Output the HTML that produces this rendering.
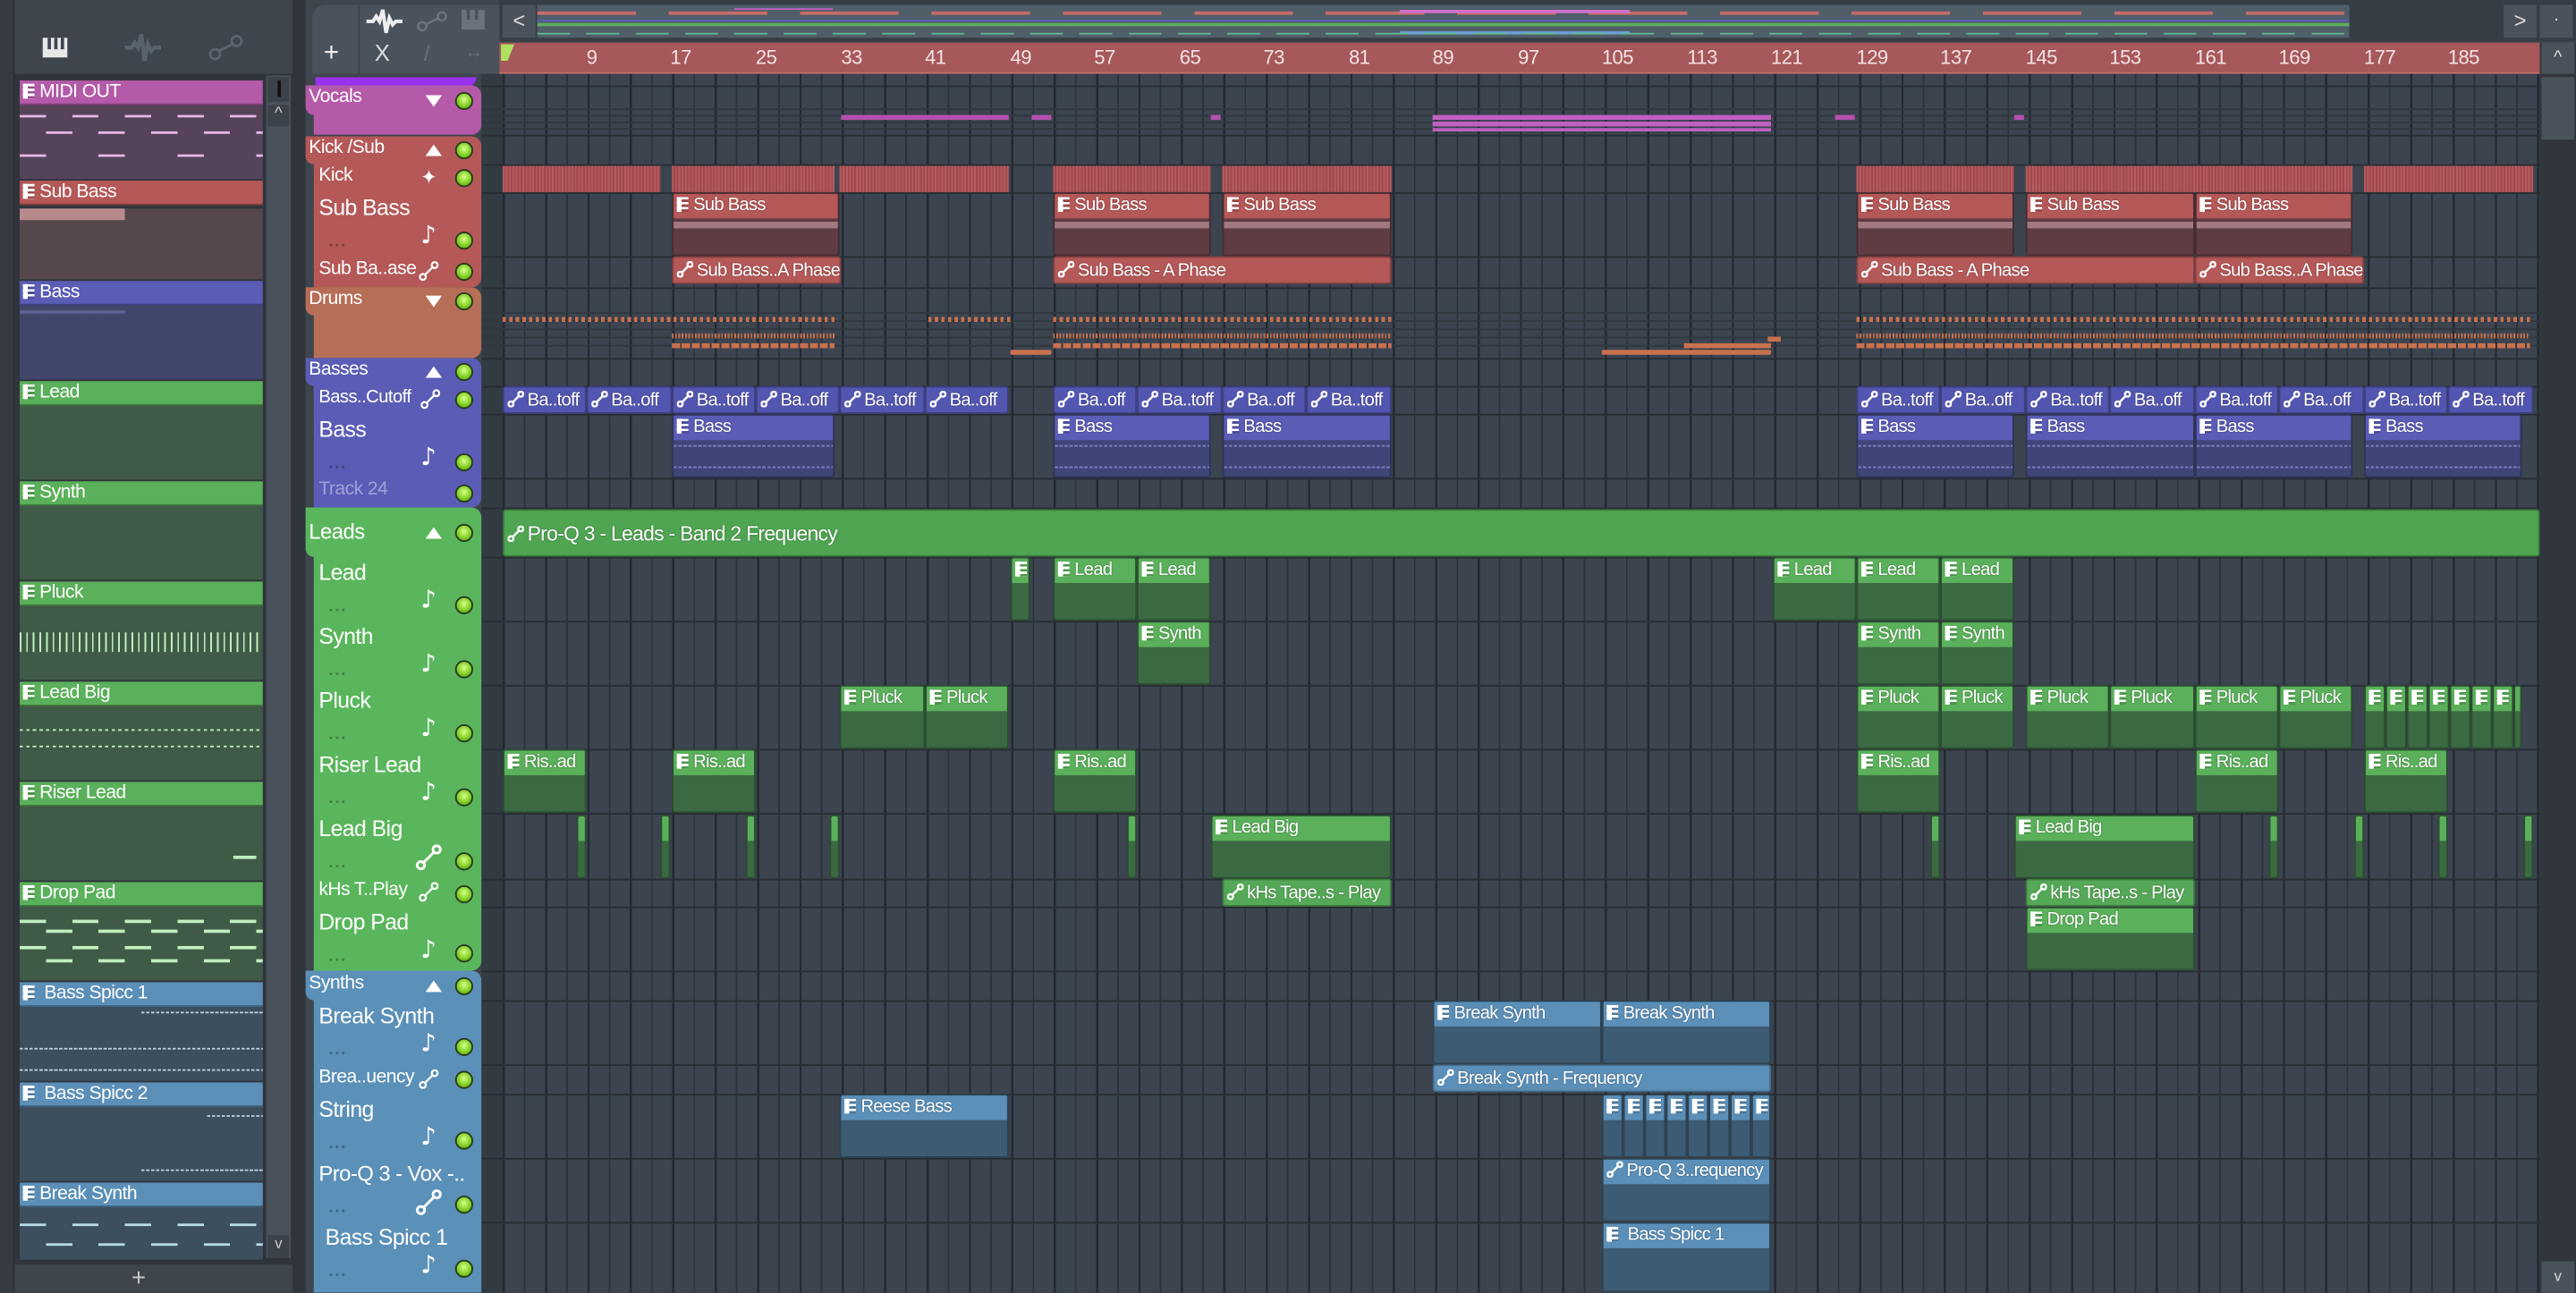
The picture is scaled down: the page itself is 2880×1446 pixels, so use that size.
<!DOCTYPE html>
<html><head><meta charset="utf-8"><style>
html,body{margin:0;padding:0;width:2880px;height:1446px;overflow:hidden;background:#3d444c}
#app{position:absolute;left:0;top:0;width:1568px;height:787px;transform:scale(1.836735);transform-origin:0 0;background:#3e454d;overflow:hidden;font-family:"Liberation Sans Narrow","Liberation Sans",sans-serif;color:#fff}
.abs{position:absolute}
.c{position:absolute;border-radius:2px;overflow:hidden;box-sizing:border-box;border:1px solid rgba(0,0,0,.25)}
.c b{display:block;height:15px;line-height:15px;font-weight:normal;font-size:11px;letter-spacing:-0.4px;padding-left:2px;white-space:nowrap;overflow:hidden;text-shadow:0 0 1px rgba(0,0,0,.4)}
.g{background:#3b6a42}.g b{background:#5bb05b}
.r{background:#5f3b42}.r b{background:#b55858}
.u{background:#3f4577}.u b{background:#5a5cb5}
.s{background:#3d5b72}.s b{background:#5b8fb8}
.r{background-image:linear-gradient(#a07a80,#a07a80);background-size:100% 4px;background-repeat:no-repeat;background-position:0 17px}
.u{background-image:repeating-linear-gradient(to right,#7a7fc0 0 2px,transparent 2px 3px),repeating-linear-gradient(to right,#7a7fc0 0 2px,transparent 2px 3px);background-size:100% 1px,100% 1px;background-repeat:no-repeat;background-position:0 18px,0 31px}
.a{height:17px}
.a.g{background:#55a857}.a.r{background:#b55858}.a.u{background:#5356b0}.a.s{background:#5b8fb8}
.a b{height:16px;line-height:16px;background:transparent!important}
i.p{display:inline-block;width:7px;height:9px;vertical-align:-1px;margin-right:3px;background:linear-gradient(to right,#fff 0 3px,transparent 3px),repeating-linear-gradient(#fff 0 1.5px,rgba(0,0,0,.15) 1.5px 3px)}
svg.k{width:10px;height:10px;vertical-align:-1px;margin-right:2px;fill:none;stroke:#fff;stroke-width:1.3}
.hl{position:absolute;left:293px;width:1253px;height:1px;background:#272d33}
.tr{position:absolute;font-size:11.5px;letter-spacing:-0.3px;white-space:nowrap}
.led{position:absolute;width:9px;height:9px;border-radius:50%;background:radial-gradient(circle at 50% 40%,#d8ff8a,#7ccc20 60%,#4b8a10);border:1px solid #2c3a20}
.tri{position:absolute;width:0;height:0;border-left:5px solid transparent;border-right:5px solid transparent}
.dn{border-top:7px solid #fff}.up{border-bottom:7px solid #fff}
.note{position:absolute;font-size:15px;line-height:15px;font-family:"DejaVu Sans",sans-serif}
.dots{position:absolute;font-size:10px;letter-spacing:1px;color:rgba(0,0,0,.3);font-weight:bold}
.bi{position:absolute;left:12px;width:148px;height:60px;overflow:hidden}
.bi b{display:block;height:14px;line-height:14px;font-weight:normal;font-size:11.5px;letter-spacing:-0.3px;padding-left:2px;border-bottom:1px solid rgba(0,0,0,.3)}
.bi div{height:46px}
.dr{position:absolute;height:3px;background:repeating-linear-gradient(to right,#c9714f 0 2px,transparent 2px 4px)}
</style></head><body><div id="app">

<div class="abs" style="left:0;top:0;width:8px;height:787px;background:#353b42"></div>
<div class="abs" style="left:8px;top:0;width:1px;height:787px;background:#2b3036"></div>
<div class="abs" style="left:26px;top:23px;width:15px;height:12px;background:#e8e8e8"></div>
<div class="abs" style="left:29px;top:23px;width:2px;height:7px;background:#3e454d"></div>
<div class="abs" style="left:33px;top:23px;width:2px;height:7px;background:#3e454d"></div>
<div class="abs" style="left:37px;top:23px;width:2px;height:7px;background:#3e454d"></div>
<svg class="abs" style="left:76px;top:20px" width="22" height="18" viewBox="0 0 22 18"><path d="M0 9h4l2-3 2 3 2-8 2 16 2-10 2 4 2-2h4" stroke="#59636c" stroke-width="2.4" fill="none"/></svg>
<svg class="abs" style="left:126px;top:20px" width="24" height="18" viewBox="0 0 24 18"><circle cx="5" cy="13" r="3" stroke="#59636c" stroke-width="1.6" fill="none"/><circle cx="18" cy="5" r="3" stroke="#59636c" stroke-width="1.6" fill="none"/><path d="M7.5 11L15.5 7" stroke="#59636c" stroke-width="1.6"/></svg>

<div class="abs" style="left:9px;top:45px;width:170px;height:725px;background:#2f353b"></div>
<div class="abs" style="left:162px;top:46px;width:15px;height:720px;background:#49515a"></div>
<div class="abs" style="left:163px;top:47px;width:13px;height:15px;background:#3b4249"></div>
<div class="abs" style="left:169px;top:49px;width:2px;height:10px;background:#111"></div>
<div class="abs" style="left:163px;top:64px;width:13px;height:13px;background:#3b4249;color:#ccc;font-size:10px;text-align:center">^</div>
<div class="abs" style="left:163px;top:752px;width:13px;height:14px;background:#3b4249;color:#ccc;font-size:9px;text-align:center">v</div>
<div class="abs" style="left:80px;top:770px;font-size:15px;color:#c8c8c8">+</div>

<div class="bi" style="top:49px"><b style="background:#b35aa8"><i class="p"></i>MIDI OUT</b><div style="background:#55435a;background-image:repeating-linear-gradient(to right,#e8b8e8 0 16px,transparent 16px 32px),repeating-linear-gradient(to right,transparent 0 16px,#e8b8e8 16px 32px),repeating-linear-gradient(to right,#e8b8e8 0 16px,transparent 16px 48px);background-size:100% 1.5px;background-repeat:no-repeat;background-position:0 6px,0 16px,0 30px"></div></div>
<div class="bi" style="top:110px"><b style="background:#b55858"><i class="p"></i>Sub Bass</b><div style="background:#56474c"><div style="height:7px;width:64px;background:#b88a8e;margin-top:2px"></div></div></div>
<div class="bi" style="top:171px"><b style="background:#5a5cb5"><i class="p"></i>Bass</b><div style="background:#41476a;background-image:linear-gradient(#5e6290,#5e6290);background-size:64px 2px;background-repeat:no-repeat;background-position:0 3px"></div></div>
<div class="bi" style="top:232px"><b style="background:#5bb05b"><i class="p"></i>Lead</b><div style="background:#3f5a46"></div></div>
<div class="bi" style="top:293px"><b style="background:#5bb05b"><i class="p"></i>Synth</b><div style="background:#3f5a46"></div></div>
<div class="bi" style="top:354px"><b style="background:#5bb05b"><i class="p"></i>Pluck</b><div style="background:#3f5a46;background-image:repeating-linear-gradient(to right,#bfeebf 0 1px,transparent 1px 4px);background-size:100% 12px;background-repeat:repeat-x;background-position:0 16px"></div></div>
<div class="bi" style="top:415px"><b style="background:#5bb05b"><i class="p"></i>Lead Big</b><div style="background:#3f5a46;background-image:repeating-linear-gradient(to right,#bfeebf 0 2px,transparent 2px 4px),repeating-linear-gradient(to right,#bfeebf 0 2px,transparent 2px 4px);background-size:100% 1px;background-repeat:no-repeat;background-position:0 14px,0 24px"></div></div>
<div class="bi" style="top:476px"><b style="background:#5bb05b"><i class="p"></i>Riser Lead</b><div style="background:#3f5a46;background-image:linear-gradient(#bfeebf,#bfeebf);background-size:14px 2px;background-repeat:no-repeat;background-position:130px 30px"></div></div>
<div class="bi" style="top:537px"><b style="background:#5bb05b"><i class="p"></i>Drop Pad</b><div style="background:#3f5a46;background-image:repeating-linear-gradient(to right,#bfeebf 0 16px,transparent 16px 32px),repeating-linear-gradient(to right,transparent 0 16px,#bfeebf 16px 32px),repeating-linear-gradient(to right,#bfeebf 0 16px,transparent 16px 32px),repeating-linear-gradient(to right,transparent 0 16px,#bfeebf 16px 32px);background-size:100% 2px;background-repeat:no-repeat;background-position:0 8px,0 14px,0 24px,0 32px"></div></div>
<div class="bi" style="top:598px"><b style="background:#5b8fb8"><i class="p"></i>&nbsp;Bass Spicc 1</b><div style="background:#3c4f5f;background-image:repeating-linear-gradient(to right,#b8d0e0 0 2px,transparent 2px 3px),repeating-linear-gradient(to right,#b8d0e0 0 2px,transparent 2px 3px),repeating-linear-gradient(to right,#b8d0e0 0 2px,transparent 2px 3px);background-size:74px 1px,100% 1px,100% 1px;background-repeat:no-repeat;background-position:right 3px,0 25px,0 38px"></div></div>
<div class="bi" style="top:659px"><b style="background:#5b8fb8"><i class="p"></i>&nbsp;Bass Spicc 2</b><div style="background:#3c4f5f;background-image:repeating-linear-gradient(to right,#b8d0e0 0 2px,transparent 2px 3px),repeating-linear-gradient(to right,#b8d0e0 0 2px,transparent 2px 3px);background-size:34px 1px,74px 1px;background-repeat:no-repeat;background-position:right 5px,right 38px"></div></div>
<div class="bi" style="top:720px;height:47px"><b style="background:#5b8fb8"><i class="p"></i>Break Synth</b><div style="background:#3c4f5f;background-image:repeating-linear-gradient(to right,#b8e0ea 0 16px,transparent 16px 32px),repeating-linear-gradient(to right,transparent 0 16px,#b8e0ea 16px 32px);background-size:100% 1.5px;background-repeat:no-repeat;background-position:0 10px,0 22px"></div></div>

<div class="abs" style="left:178px;top:0;width:8px;height:787px;background:#2f353b"></div>
<div class="abs" style="left:190px;top:3px;width:115px;height:42px;background:#4a525b;border-radius:8px 0 0 0"></div>
<div class="abs" style="left:218px;top:3px;width:1px;height:42px;background:#3a4047"></div>
<div class="abs" style="left:197px;top:24px;font-size:16px;color:#eee">+</div>
<svg class="abs" style="left:223px;top:5px" width="22" height="16" viewBox="0 0 22 16"><path d="M0 8h4l2-3 2 3 2-7 2 14 2-9 2 4 2-2h4" stroke="#eee" stroke-width="2.2" fill="none"/></svg>
<div class="abs" style="left:228px;top:24px;font-size:14px;color:#ddd">X</div>
<svg class="abs" style="left:253px;top:6px" width="20" height="14" viewBox="0 0 20 14"><circle cx="4" cy="10" r="2.5" stroke="#6a737c" stroke-width="1.4" fill="none"/><circle cx="16" cy="4" r="2.5" stroke="#6a737c" stroke-width="1.4" fill="none"/><path d="M6 9L14 5" stroke="#6a737c" stroke-width="1.4"/></svg>
<div class="abs" style="left:281px;top:6px;width:14px;height:12px;background:#6a737c"></div>
<div class="abs" style="left:284px;top:6px;width:2px;height:6px;background:#4a525b"></div><div class="abs" style="left:289px;top:6px;width:2px;height:6px;background:#4a525b"></div>
<div class="abs" style="left:258px;top:25px;font-size:13px;color:#6a737c">/</div>
<div class="abs" style="left:283px;top:26px;font-size:11px;color:#6a737c">↔</div>

<div class="abs" style="left:304px;top:0;width:1264px;height:25px;background:#363d44"></div>
<div class="abs" style="left:306px;top:3px;width:20px;height:20px;background:#4a525b;color:#ddd;font-size:13px;text-align:center;line-height:20px">&lt;</div>
<div class="abs" style="left:327px;top:3px;width:1103px;height:20px;background:#505e68">
 <div class="abs" style="left:0;top:4px;width:1103px;height:2px;background:repeating-linear-gradient(to right,#c86c68 0 60px,transparent 60px 80px)"></div>
 <div class="abs" style="left:0;top:9px;width:1103px;height:1px;background:#5a5cc0"></div>
 <div class="abs" style="left:0;top:11px;width:1103px;height:2px;background:#5cad5c"></div>
 <div class="abs" style="left:120px;top:2px;width:60px;height:1px;background:#c060c0"></div>
 <div class="abs" style="left:525px;top:3px;width:140px;height:2px;background:#d070d0"></div>
 <div class="abs" style="left:525px;top:16px;width:140px;height:2px;background:#6aa0d0"></div>
 <div class="abs" style="left:0;top:17px;width:1103px;height:1px;background:repeating-linear-gradient(to right,#60b890 0 20px,transparent 20px 30px)"></div>
</div>
<div class="abs" style="left:1524px;top:3px;width:20px;height:20px;background:#4a525b;color:#ddd;font-size:13px;text-align:center;line-height:20px">&gt;</div>
<div class="abs" style="left:1546px;top:3px;width:20px;height:20px;background:#4a525b;color:#ddd;font-size:11px;text-align:center;line-height:18px">·</div>

<div class="abs" style="left:304px;top:26px;width:1242px;height:18px;background:#a7585b;border-bottom:1px solid #c07070"></div>
<div class="abs" style="left:305px;top:27px;width:0;height:0;border-left:4px solid #b0e060;border-right:4px solid transparent;border-top:10px solid #b0e060"></div>
<div class="abs" style="top:27px;left:0;width:1546px;height:17px;font-size:12px;line-height:17px;color:#f3e3e3;letter-spacing:-0.3px">
<span class="abs" style="left:357px">9</span><span class="abs" style="left:408px">17</span><span class="abs" style="left:460px">25</span><span class="abs" style="left:512px">33</span><span class="abs" style="left:563px">41</span><span class="abs" style="left:615px">49</span><span class="abs" style="left:666px">57</span><span class="abs" style="left:718px">65</span><span class="abs" style="left:769px">73</span><span class="abs" style="left:821px">81</span><span class="abs" style="left:872px">89</span><span class="abs" style="left:924px">97</span><span class="abs" style="left:975px">105</span><span class="abs" style="left:1027px">113</span><span class="abs" style="left:1078px">121</span><span class="abs" style="left:1130px">129</span><span class="abs" style="left:1181px">137</span><span class="abs" style="left:1233px">145</span><span class="abs" style="left:1284px">153</span><span class="abs" style="left:1336px">161</span><span class="abs" style="left:1387px">169</span><span class="abs" style="left:1439px">177</span><span class="abs" style="left:1490px">185</span>
</div>
<div class="abs" style="left:1546px;top:26px;width:22px;height:761px;background:#30363c"></div>
<div class="abs" style="left:1547px;top:26px;width:20px;height:19px;background:#4a525b;color:#ddd;font-size:11px;text-align:center;line-height:19px">^</div>
<div class="abs" style="left:1547px;top:47px;width:20px;height:38px;background:#4a525b"></div>
<div class="abs" style="left:1547px;top:768px;width:20px;height:19px;background:#4a525b;color:#ddd;font-size:9px;text-align:center;line-height:19px">v</div>

<div class="abs" style="left:293px;top:45px;width:13px;height:742px;background:#323a42"></div>
<div class="abs" style="left:306px;top:45px;width:1240px;height:742px;background-color:#3b444f;background-image:repeating-linear-gradient(to right,#23292f 0 1.3px,transparent 1.3px 25.8px),repeating-linear-gradient(to right,#2c333a 0 1px,transparent 1px 12.9px)"></div>
<div class="hl" style="top:52px"></div><div class="hl" style="top:82px"></div><div class="hl" style="top:100px"></div><div class="hl" style="top:117px"></div><div class="hl" style="top:156px"></div><div class="hl" style="top:175px"></div><div class="hl" style="top:218px"></div><div class="hl" style="top:235px"></div><div class="hl" style="top:252px"></div><div class="hl" style="top:291px"></div><div class="hl" style="top:309px"></div><div class="hl" style="top:339px"></div><div class="hl" style="top:378px"></div><div class="hl" style="top:417px"></div><div class="hl" style="top:456px"></div><div class="hl" style="top:495px"></div><div class="hl" style="top:535px"></div><div class="hl" style="top:552px"></div><div class="hl" style="top:591px"></div><div class="hl" style="top:609px"></div><div class="hl" style="top:648px"></div><div class="hl" style="top:666px"></div><div class="hl" style="top:705px"></div><div class="hl" style="top:744px"></div>
<div class="hl" style="top:66px;background:#30373e"></div><div class="hl" style="top:70px;background:#30373e"></div><div class="hl" style="top:74px;background:#30373e"></div><div class="hl" style="top:78px;background:#30373e"></div>
<div class="hl" style="top:190px;background:#30373e"></div><div class="hl" style="top:195px;background:#30373e"></div><div class="hl" style="top:200px;background:#30373e"></div><div class="hl" style="top:205px;background:#30373e"></div><div class="hl" style="top:210px;background:#30373e"></div>

<div class="abs" style="left:192px;top:47px;width:98px;height:6px;background:#9a30f0;border-radius:0 0 6px 0"></div>
<div class="abs" style="left:191px;top:52px;width:102px;height:30px;background:#b45aa8;border-radius:0 6px 6px 0"></div>
<div class="abs" style="left:186px;top:52px;width:80px;height:18px;background:#b45aa8;border-radius:0 0 0 5px"></div>
<div class="tr" style="left:188px;top:53px">Vocals</div><div class="tri dn" style="left:259px;top:58px"></div><div class="led" style="left:277px;top:56px"></div>

<div class="abs" style="left:191px;top:83px;width:102px;height:92px;background:#b55858;border-radius:0 6px 6px 0"></div>
<div class="abs" style="left:186px;top:83px;width:80px;height:17px;background:#b55858;border-radius:0 0 0 5px"></div>
<div class="tr" style="left:188px;top:84px">Kick /Sub</div><div class="tri up" style="left:259px;top:88px"></div><div class="led" style="left:277px;top:86px"></div>
<div class="tr" style="left:194px;top:101px">Kick</div><div class="note" style="left:256px;top:101px;font-size:12px">✦</div><div class="led" style="left:277px;top:103px"></div>
<div class="tr" style="left:194px;top:119px;font-size:13.5px">Sub Bass</div><div class="note" style="left:256px;top:136px">♪</div><div class="dots" style="left:200px;top:142px">...</div><div class="led" style="left:277px;top:141px"></div>
<div class="tr" style="left:194px;top:158px">Sub Ba..ase</div><svg class="abs" style="left:255px;top:159px" width="12" height="12" viewBox="0 0 10 10"><circle cx="2" cy="8" r="1.5" stroke="#fff" fill="none"/><circle cx="8" cy="2" r="1.5" stroke="#fff" fill="none"/><path d="M3 7L7 3" stroke="#fff"/></svg><div class="led" style="left:277px;top:160px"></div>

<div class="abs" style="left:191px;top:175px;width:102px;height:43px;background:#b76e56;border-radius:0 6px 6px 0"></div>
<div class="abs" style="left:186px;top:175px;width:80px;height:17px;background:#b76e56;border-radius:0 0 0 5px"></div>
<div class="tr" style="left:188px;top:176px">Drums</div><div class="tri dn" style="left:259px;top:180px"></div><div class="led" style="left:277px;top:178px"></div>

<div class="abs" style="left:191px;top:218px;width:102px;height:91px;background:#5a5cb5;border-radius:0 6px 6px 0"></div>
<div class="abs" style="left:186px;top:218px;width:80px;height:17px;background:#5a5cb5;border-radius:0 0 0 5px"></div>
<div class="tr" style="left:188px;top:219px">Basses</div><div class="tri up" style="left:259px;top:223px"></div><div class="led" style="left:277px;top:221px"></div>
<div class="tr" style="left:194px;top:236px;font-size:11px">Bass..Cutoff</div><svg class="abs" style="left:256px;top:237px" width="12" height="12" viewBox="0 0 10 10"><circle cx="2" cy="8" r="1.5" stroke="#fff" fill="none"/><circle cx="8" cy="2" r="1.5" stroke="#fff" fill="none"/><path d="M3 7L7 3" stroke="#fff"/></svg><div class="led" style="left:277px;top:238px"></div>
<div class="tr" style="left:194px;top:254px;font-size:13.5px">Bass</div><div class="note" style="left:256px;top:271px">♪</div><div class="dots" style="left:200px;top:277px">...</div><div class="led" style="left:277px;top:276px"></div>
<div class="tr" style="left:194px;top:292px;color:#9fa1d8">Track 24</div><div class="led" style="left:277px;top:295px"></div>

<div class="abs" style="left:191px;top:309px;width:102px;height:282px;background:#5ab65c;border-radius:0 6px 6px 0"></div>
<div class="abs" style="left:186px;top:309px;width:80px;height:30px;background:#5ab65c;border-radius:0 0 0 5px"></div>
<div class="tr" style="left:188px;top:316px;font-size:13px">Leads</div><div class="tri up" style="left:259px;top:321px"></div><div class="led" style="left:277px;top:319px"></div>
<div class="tr" style="left:194px;top:341px;font-size:13.5px">Lead</div><div class="note" style="left:256px;top:358px">♪</div><div class="dots" style="left:200px;top:364px">...</div><div class="led" style="left:277px;top:363px"></div>
<div class="tr" style="left:194px;top:380px;font-size:13.5px">Synth</div><div class="note" style="left:256px;top:397px">♪</div><div class="dots" style="left:200px;top:403px">...</div><div class="led" style="left:277px;top:402px"></div>
<div class="tr" style="left:194px;top:419px;font-size:13.5px">Pluck</div><div class="note" style="left:256px;top:436px">♪</div><div class="dots" style="left:200px;top:442px">...</div><div class="led" style="left:277px;top:441px"></div>
<div class="tr" style="left:194px;top:458px;font-size:13.5px">Riser Lead</div><div class="note" style="left:256px;top:475px">♪</div><div class="dots" style="left:200px;top:481px">...</div><div class="led" style="left:277px;top:480px"></div>
<div class="tr" style="left:194px;top:497px;font-size:13.5px">Lead Big</div><svg class="abs" style="left:253px;top:514px" width="16" height="16" viewBox="0 0 10 10"><circle cx="2" cy="8" r="1.4" stroke="#fff" fill="none"/><circle cx="8" cy="2" r="1.4" stroke="#fff" fill="none"/><path d="M3 7L7 3" stroke="#fff"/></svg><div class="dots" style="left:200px;top:520px">...</div><div class="led" style="left:277px;top:519px"></div>
<div class="tr" style="left:194px;top:536px">kHs T..Play</div><svg class="abs" style="left:255px;top:537px" width="12" height="12" viewBox="0 0 10 10"><circle cx="2" cy="8" r="1.5" stroke="#fff" fill="none"/><circle cx="8" cy="2" r="1.5" stroke="#fff" fill="none"/><path d="M3 7L7 3" stroke="#fff"/></svg><div class="led" style="left:277px;top:539px"></div>
<div class="tr" style="left:194px;top:554px;font-size:13.5px">Drop Pad</div><div class="note" style="left:256px;top:571px">♪</div><div class="dots" style="left:200px;top:577px">...</div><div class="led" style="left:277px;top:575px"></div>

<div class="abs" style="left:191px;top:591px;width:102px;height:196px;background:#5b90b8;border-radius:0 6px 0 0"></div>
<div class="abs" style="left:186px;top:591px;width:80px;height:18px;background:#5b90b8;border-radius:0 0 0 5px"></div>
<div class="tr" style="left:188px;top:593px">Synths</div><div class="tri up" style="left:259px;top:597px"></div><div class="led" style="left:277px;top:595px"></div>
<div class="tr" style="left:194px;top:611px;font-size:13.5px">Break Synth</div><div class="note" style="left:256px;top:628px">♪</div><div class="dots" style="left:200px;top:634px">...</div><div class="led" style="left:277px;top:632px"></div>
<div class="tr" style="left:194px;top:650px">Brea..uency</div><svg class="abs" style="left:255px;top:651px" width="12" height="12" viewBox="0 0 10 10"><circle cx="2" cy="8" r="1.5" stroke="#fff" fill="none"/><circle cx="8" cy="2" r="1.5" stroke="#fff" fill="none"/><path d="M3 7L7 3" stroke="#fff"/></svg><div class="led" style="left:277px;top:652px"></div>
<div class="tr" style="left:194px;top:668px;font-size:13.5px">String</div><div class="note" style="left:256px;top:685px">♪</div><div class="dots" style="left:200px;top:691px">...</div><div class="led" style="left:277px;top:689px"></div>
<div class="tr" style="left:194px;top:707px;font-size:13px">Pro-Q 3 - Vox -..</div><svg class="abs" style="left:253px;top:724px" width="16" height="16" viewBox="0 0 10 10"><circle cx="2" cy="8" r="1.4" stroke="#fff" fill="none"/><circle cx="8" cy="2" r="1.4" stroke="#fff" fill="none"/><path d="M3 7L7 3" stroke="#fff"/></svg><div class="dots" style="left:200px;top:730px">...</div><div class="led" style="left:277px;top:728px"></div>
<div class="tr" style="left:198px;top:746px;font-size:13.5px">Bass Spicc 1</div><div class="note" style="left:256px;top:763px">♪</div><div class="dots" style="left:200px;top:769px">...</div><div class="led" style="left:277px;top:767px"></div>

<div class="abs" style="left:512px;top:70px;width:102px;height:3px;background:#b54fb0"></div>
<div class="abs" style="left:628px;top:70px;width:12px;height:3px;background:#b54fb0"></div>
<div class="abs" style="left:737px;top:70px;width:6px;height:3px;background:#b54fb0"></div>
<div class="abs" style="left:872px;top:70px;width:206px;height:3px;background:#c060c0"></div>
<div class="abs" style="left:872px;top:74px;width:206px;height:3px;background:#c060c0"></div>
<div class="abs" style="left:872px;top:78px;width:206px;height:2px;background:#c060c0"></div>
<div class="abs" style="left:1117px;top:70px;width:12px;height:3px;background:#b54fb0"></div>
<div class="abs" style="left:1226px;top:70px;width:6px;height:3px;background:#b54fb0"></div>

<div class="abs" style="top:101px;height:16px;left:306px;width:96px;background:repeating-linear-gradient(to right,#b75b5e 0 1px,#9c4a4e 1px 2px)"></div>
<div class="abs" style="top:101px;height:16px;left:409px;width:99px;background:repeating-linear-gradient(to right,#b75b5e 0 1px,#9c4a4e 1px 2px)"></div>
<div class="abs" style="top:101px;height:16px;left:511px;width:103px;background:repeating-linear-gradient(to right,#b75b5e 0 1px,#9c4a4e 1px 2px)"></div>
<div class="abs" style="top:101px;height:16px;left:641px;width:96px;background:repeating-linear-gradient(to right,#b75b5e 0 1px,#9c4a4e 1px 2px)"></div>
<div class="abs" style="top:101px;height:16px;left:744px;width:103px;background:repeating-linear-gradient(to right,#b75b5e 0 1px,#9c4a4e 1px 2px)"></div>
<div class="abs" style="top:101px;height:16px;left:1130px;width:96px;background:repeating-linear-gradient(to right,#b75b5e 0 1px,#9c4a4e 1px 2px)"></div>
<div class="abs" style="top:101px;height:16px;left:1233px;width:199px;background:repeating-linear-gradient(to right,#b75b5e 0 1px,#9c4a4e 1px 2px)"></div>
<div class="abs" style="top:101px;height:16px;left:1439px;width:103px;background:repeating-linear-gradient(to right,#b75b5e 0 1px,#9c4a4e 1px 2px)"></div>

<div class="c r" style="left:409px;top:117px;width:102px;height:39px"><b><i class="p"></i>Sub Bass</b></div>
<div class="c r" style="left:641px;top:117px;width:96px;height:39px"><b><i class="p"></i>Sub Bass</b></div>
<div class="c r" style="left:744px;top:117px;width:103px;height:39px"><b><i class="p"></i>Sub Bass</b></div>
<div class="c r" style="left:1130px;top:117px;width:96px;height:39px"><b><i class="p"></i>Sub Bass</b></div>
<div class="c r" style="left:1233px;top:117px;width:103px;height:39px"><b><i class="p"></i>Sub Bass</b></div>
<div class="c r" style="left:1336px;top:117px;width:96px;height:39px"><b><i class="p"></i>Sub Bass</b></div>
<div class="c r a" style="left:409px;top:156px;width:103px;background-image:none"><b><svg class="k" viewBox="0 0 10 10"><circle cx="2" cy="8" r="1.5"/><circle cx="8" cy="2" r="1.5"/><path d="M3 7L7 3"/></svg>Sub Bass..A Phase</b></div>
<div class="c r a" style="left:641px;top:156px;width:206px;background-image:none"><b><svg class="k" viewBox="0 0 10 10"><circle cx="2" cy="8" r="1.5"/><circle cx="8" cy="2" r="1.5"/><path d="M3 7L7 3"/></svg>Sub Bass - A Phase</b></div>
<div class="c r a" style="left:1130px;top:156px;width:206px;background-image:none"><b><svg class="k" viewBox="0 0 10 10"><circle cx="2" cy="8" r="1.5"/><circle cx="8" cy="2" r="1.5"/><path d="M3 7L7 3"/></svg>Sub Bass - A Phase</b></div>
<div class="c r a" style="left:1336px;top:156px;width:103px;background-image:none"><b><svg class="k" viewBox="0 0 10 10"><circle cx="2" cy="8" r="1.5"/><circle cx="8" cy="2" r="1.5"/><path d="M3 7L7 3"/></svg>Sub Bass..A Phase</b></div>

<div class="dr" style="left:306px;top:193px;width:202px"></div>
<div class="dr" style="left:641px;top:193px;width:206px"></div><div class="dr" style="left:1130px;top:193px;width:410px"></div>
<div class="dr" style="left:565px;top:193px;width:50px"></div>
<div class="dr" style="left:409px;top:203px;width:99px;background:repeating-linear-gradient(to right,#c9714f 0 1px,transparent 1px 2px)"></div>
<div class="dr" style="left:641px;top:203px;width:206px;background:repeating-linear-gradient(to right,#c9714f 0 1px,transparent 1px 2px)"></div>
<div class="dr" style="left:1130px;top:203px;width:410px;background:repeating-linear-gradient(to right,#c9714f 0 1px,transparent 1px 2px)"></div>
<div class="dr" style="left:409px;top:209px;width:99px;height:3px;background:repeating-linear-gradient(to right,#c9714f 0 5px,transparent 5px 6px)"></div>
<div class="dr" style="left:641px;top:209px;width:206px;height:3px;background:repeating-linear-gradient(to right,#c9714f 0 5px,transparent 5px 6px)"></div>
<div class="dr" style="left:1130px;top:209px;width:410px;height:3px;background:repeating-linear-gradient(to right,#c9714f 0 5px,transparent 5px 6px)"></div>
<div class="abs" style="left:615px;top:213px;width:25px;height:3px;background:#c9714f;border-radius:1px"></div>
<div class="abs" style="left:975px;top:213px;width:103px;height:3px;background:#c9714f;border-radius:1px"></div>
<div class="abs" style="left:1025px;top:209px;width:53px;height:3px;background:#c9714f"></div>
<div class="abs" style="left:1076px;top:205px;width:8px;height:3px;background:#c9714f"></div>

<div class="c u a" style="left:306px;top:235px;width:51px;background-image:none"><b><svg class="k" viewBox="0 0 10 10"><circle cx="2" cy="8" r="1.5"/><circle cx="8" cy="2" r="1.5"/><path d="M3 7L7 3"/></svg>Ba..toff</b></div>
<div class="c u a" style="left:357px;top:235px;width:52px;background-image:none"><b><svg class="k" viewBox="0 0 10 10"><circle cx="2" cy="8" r="1.5"/><circle cx="8" cy="2" r="1.5"/><path d="M3 7L7 3"/></svg>Ba..off</b></div>
<div class="c u a" style="left:409px;top:235px;width:51px;background-image:none"><b><svg class="k" viewBox="0 0 10 10"><circle cx="2" cy="8" r="1.5"/><circle cx="8" cy="2" r="1.5"/><path d="M3 7L7 3"/></svg>Ba..toff</b></div>
<div class="c u a" style="left:460px;top:235px;width:51px;background-image:none"><b><svg class="k" viewBox="0 0 10 10"><circle cx="2" cy="8" r="1.5"/><circle cx="8" cy="2" r="1.5"/><path d="M3 7L7 3"/></svg>Ba..off</b></div>
<div class="c u a" style="left:511px;top:235px;width:52px;background-image:none"><b><svg class="k" viewBox="0 0 10 10"><circle cx="2" cy="8" r="1.5"/><circle cx="8" cy="2" r="1.5"/><path d="M3 7L7 3"/></svg>Ba..toff</b></div>
<div class="c u a" style="left:563px;top:235px;width:51px;background-image:none"><b><svg class="k" viewBox="0 0 10 10"><circle cx="2" cy="8" r="1.5"/><circle cx="8" cy="2" r="1.5"/><path d="M3 7L7 3"/></svg>Ba..off</b></div>
<div class="c u a" style="left:641px;top:235px;width:51px;background-image:none"><b><svg class="k" viewBox="0 0 10 10"><circle cx="2" cy="8" r="1.5"/><circle cx="8" cy="2" r="1.5"/><path d="M3 7L7 3"/></svg>Ba..off</b></div>
<div class="c u a" style="left:692px;top:235px;width:52px;background-image:none"><b><svg class="k" viewBox="0 0 10 10"><circle cx="2" cy="8" r="1.5"/><circle cx="8" cy="2" r="1.5"/><path d="M3 7L7 3"/></svg>Ba..toff</b></div>
<div class="c u a" style="left:744px;top:235px;width:51px;background-image:none"><b><svg class="k" viewBox="0 0 10 10"><circle cx="2" cy="8" r="1.5"/><circle cx="8" cy="2" r="1.5"/><path d="M3 7L7 3"/></svg>Ba..off</b></div>
<div class="c u a" style="left:795px;top:235px;width:52px;background-image:none"><b><svg class="k" viewBox="0 0 10 10"><circle cx="2" cy="8" r="1.5"/><circle cx="8" cy="2" r="1.5"/><path d="M3 7L7 3"/></svg>Ba..toff</b></div>
<div class="c u a" style="left:1130px;top:235px;width:51px;background-image:none"><b><svg class="k" viewBox="0 0 10 10"><circle cx="2" cy="8" r="1.5"/><circle cx="8" cy="2" r="1.5"/><path d="M3 7L7 3"/></svg>Ba..toff</b></div>
<div class="c u a" style="left:1181px;top:235px;width:52px;background-image:none"><b><svg class="k" viewBox="0 0 10 10"><circle cx="2" cy="8" r="1.5"/><circle cx="8" cy="2" r="1.5"/><path d="M3 7L7 3"/></svg>Ba..off</b></div>
<div class="c u a" style="left:1233px;top:235px;width:51px;background-image:none"><b><svg class="k" viewBox="0 0 10 10"><circle cx="2" cy="8" r="1.5"/><circle cx="8" cy="2" r="1.5"/><path d="M3 7L7 3"/></svg>Ba..toff</b></div>
<div class="c u a" style="left:1284px;top:235px;width:52px;background-image:none"><b><svg class="k" viewBox="0 0 10 10"><circle cx="2" cy="8" r="1.5"/><circle cx="8" cy="2" r="1.5"/><path d="M3 7L7 3"/></svg>Ba..off</b></div>
<div class="c u a" style="left:1336px;top:235px;width:51px;background-image:none"><b><svg class="k" viewBox="0 0 10 10"><circle cx="2" cy="8" r="1.5"/><circle cx="8" cy="2" r="1.5"/><path d="M3 7L7 3"/></svg>Ba..toff</b></div>
<div class="c u a" style="left:1387px;top:235px;width:52px;background-image:none"><b><svg class="k" viewBox="0 0 10 10"><circle cx="2" cy="8" r="1.5"/><circle cx="8" cy="2" r="1.5"/><path d="M3 7L7 3"/></svg>Ba..off</b></div>
<div class="c u a" style="left:1439px;top:235px;width:51px;background-image:none"><b><svg class="k" viewBox="0 0 10 10"><circle cx="2" cy="8" r="1.5"/><circle cx="8" cy="2" r="1.5"/><path d="M3 7L7 3"/></svg>Ba..toff</b></div>
<div class="c u a" style="left:1490px;top:235px;width:52px;background-image:none"><b><svg class="k" viewBox="0 0 10 10"><circle cx="2" cy="8" r="1.5"/><circle cx="8" cy="2" r="1.5"/><path d="M3 7L7 3"/></svg>Ba..toff</b></div>

<div class="c u" style="left:409px;top:252px;width:99px;height:39px"><b><i class="p"></i>Bass</b></div>
<div class="c u" style="left:641px;top:252px;width:96px;height:39px"><b><i class="p"></i>Bass</b></div>
<div class="c u" style="left:744px;top:252px;width:103px;height:39px"><b><i class="p"></i>Bass</b></div>
<div class="c u" style="left:1130px;top:252px;width:96px;height:39px"><b><i class="p"></i>Bass</b></div>
<div class="c u" style="left:1233px;top:252px;width:103px;height:39px"><b><i class="p"></i>Bass</b></div>
<div class="c u" style="left:1336px;top:252px;width:96px;height:39px"><b><i class="p"></i>Bass</b></div>
<div class="c u" style="left:1439px;top:252px;width:96px;height:39px"><b><i class="p"></i>Bass</b></div>

<div class="c g a" style="left:306px;top:310px;width:1240px;height:29px;background:#4fa552"><b style="height:28px;line-height:28px;font-size:12.5px"><svg class="k" viewBox="0 0 10 10"><circle cx="2" cy="8" r="1.5"/><circle cx="8" cy="2" r="1.5"/><path d="M3 7L7 3"/></svg>Pro-Q 3 - Leads - Band 2 Frequency</b></div>

<div class="c g" style="left:615px;top:339px;width:12px;height:39px"><b><i class="p"></i></b></div>
<div class="c g" style="left:641px;top:339px;width:51px;height:39px"><b><i class="p"></i>Lead</b></div>
<div class="c g" style="left:692px;top:339px;width:45px;height:39px"><b><i class="p"></i>Lead</b></div>
<div class="c g" style="left:1079px;top:339px;width:51px;height:39px"><b><i class="p"></i>Lead</b></div>
<div class="c g" style="left:1130px;top:339px;width:51px;height:39px"><b><i class="p"></i>Lead</b></div>
<div class="c g" style="left:1181px;top:339px;width:45px;height:39px"><b><i class="p"></i>Lead</b></div>
<div class="c g" style="left:692px;top:378px;width:45px;height:39px"><b><i class="p"></i>Synth</b></div>
<div class="c g" style="left:1130px;top:378px;width:51px;height:39px"><b><i class="p"></i>Synth</b></div>
<div class="c g" style="left:1181px;top:378px;width:45px;height:39px"><b><i class="p"></i>Synth</b></div>
<div class="c g" style="left:511px;top:417px;width:52px;height:39px"><b><i class="p"></i>Pluck</b></div>
<div class="c g" style="left:563px;top:417px;width:51px;height:39px"><b><i class="p"></i>Pluck</b></div>
<div class="c g" style="left:1130px;top:417px;width:51px;height:39px"><b><i class="p"></i>Pluck</b></div>
<div class="c g" style="left:1181px;top:417px;width:45px;height:39px"><b><i class="p"></i>Pluck</b></div>
<div class="c g" style="left:1233px;top:417px;width:51px;height:39px"><b><i class="p"></i>Pluck</b></div>
<div class="c g" style="left:1284px;top:417px;width:52px;height:39px"><b><i class="p"></i>Pluck</b></div>
<div class="c g" style="left:1336px;top:417px;width:51px;height:39px"><b><i class="p"></i>Pluck</b></div>
<div class="c g" style="left:1387px;top:417px;width:45px;height:39px"><b><i class="p"></i>Pluck</b></div>
<div class="c g" style="left:1439px;top:417px;width:13px;height:39px"><b><i class="p"></i></b></div>
<div class="c g" style="left:1452px;top:417px;width:13px;height:39px"><b><i class="p"></i></b></div>
<div class="c g" style="left:1465px;top:417px;width:13px;height:39px"><b><i class="p"></i></b></div>
<div class="c g" style="left:1478px;top:417px;width:13px;height:39px"><b><i class="p"></i></b></div>
<div class="c g" style="left:1491px;top:417px;width:13px;height:39px"><b><i class="p"></i></b></div>
<div class="c g" style="left:1504px;top:417px;width:13px;height:39px"><b><i class="p"></i></b></div>
<div class="c g" style="left:1517px;top:417px;width:13px;height:39px"><b><i class="p"></i></b></div>
<div class="c g" style="left:1530px;top:417px;width:5px;height:39px"><b></b></div>
<div class="c g" style="left:306px;top:456px;width:51px;height:39px"><b><i class="p"></i>Ris..ad</b></div>
<div class="c g" style="left:409px;top:456px;width:51px;height:39px"><b><i class="p"></i>Ris..ad</b></div>
<div class="c g" style="left:641px;top:456px;width:51px;height:39px"><b><i class="p"></i>Ris..ad</b></div>
<div class="c g" style="left:1130px;top:456px;width:51px;height:39px"><b><i class="p"></i>Ris..ad</b></div>
<div class="c g" style="left:1336px;top:456px;width:51px;height:39px"><b><i class="p"></i>Ris..ad</b></div>
<div class="c g" style="left:1439px;top:456px;width:51px;height:39px"><b><i class="p"></i>Ris..ad</b></div>
<div class="c g" style="left:351px;top:496px;width:6px;height:39px"><b></b></div>
<div class="c g" style="left:402px;top:496px;width:6px;height:39px"><b></b></div>
<div class="c g" style="left:454px;top:496px;width:6px;height:39px"><b></b></div>
<div class="c g" style="left:505px;top:496px;width:6px;height:39px"><b></b></div>
<div class="c g" style="left:686px;top:496px;width:6px;height:39px"><b></b></div>
<div class="c g" style="left:737px;top:496px;width:110px;height:39px"><b><i class="p"></i>Lead Big</b></div>
<div class="c g" style="left:1175px;top:496px;width:6px;height:39px"><b></b></div>
<div class="c g" style="left:1226px;top:496px;width:110px;height:39px"><b><i class="p"></i>Lead Big</b></div>
<div class="c g" style="left:1381px;top:496px;width:6px;height:39px"><b></b></div>
<div class="c g" style="left:1433px;top:496px;width:6px;height:39px"><b></b></div>
<div class="c g" style="left:1484px;top:496px;width:6px;height:39px"><b></b></div>
<div class="c g" style="left:1536px;top:496px;width:6px;height:39px"><b></b></div>
<div class="c g a" style="left:744px;top:535px;width:103px"><b><svg class="k" viewBox="0 0 10 10"><circle cx="2" cy="8" r="1.5"/><circle cx="8" cy="2" r="1.5"/><path d="M3 7L7 3"/></svg>kHs Tape..s - Play</b></div>
<div class="c g a" style="left:1233px;top:535px;width:103px"><b><svg class="k" viewBox="0 0 10 10"><circle cx="2" cy="8" r="1.5"/><circle cx="8" cy="2" r="1.5"/><path d="M3 7L7 3"/></svg>kHs Tape..s - Play</b></div>
<div class="c g" style="left:1233px;top:552px;width:103px;height:39px"><b><i class="p"></i>Drop Pad</b></div>

<div class="c s" style="left:872px;top:609px;width:103px;height:39px"><b><i class="p"></i>Break Synth</b></div>
<div class="c s" style="left:975px;top:609px;width:103px;height:39px"><b><i class="p"></i>Break Synth</b></div>
<div class="c s a" style="left:872px;top:648px;width:206px"><b><svg class="k" viewBox="0 0 10 10"><circle cx="2" cy="8" r="1.5"/><circle cx="8" cy="2" r="1.5"/><path d="M3 7L7 3"/></svg>Break Synth - Frequency</b></div>
<div class="c s" style="left:511px;top:666px;width:103px;height:39px"><b><i class="p"></i>Reese Bass</b></div>
<div class="c s" style="left:975px;top:666px;width:13px;height:39px"><b><i class="p"></i></b></div>
<div class="c s" style="left:988px;top:666px;width:13px;height:39px"><b><i class="p"></i></b></div>
<div class="c s" style="left:1001px;top:666px;width:13px;height:39px"><b><i class="p"></i></b></div>
<div class="c s" style="left:1014px;top:666px;width:13px;height:39px"><b><i class="p"></i></b></div>
<div class="c s" style="left:1027px;top:666px;width:13px;height:39px"><b><i class="p"></i></b></div>
<div class="c s" style="left:1040px;top:666px;width:13px;height:39px"><b><i class="p"></i></b></div>
<div class="c s" style="left:1053px;top:666px;width:13px;height:39px"><b><i class="p"></i></b></div>
<div class="c s" style="left:1066px;top:666px;width:12px;height:39px"><b><i class="p"></i></b></div>
<div class="c s" style="left:975px;top:705px;width:103px;height:39px"><b><svg class="k" viewBox="0 0 10 10"><circle cx="2" cy="8" r="1.5"/><circle cx="8" cy="2" r="1.5"/><path d="M3 7L7 3"/></svg>Pro-Q 3..requency</b></div>
<div class="c s" style="left:975px;top:744px;width:103px;height:43px"><b><i class="p"></i>&nbsp;Bass Spicc 1</b></div>

</div></body></html>
